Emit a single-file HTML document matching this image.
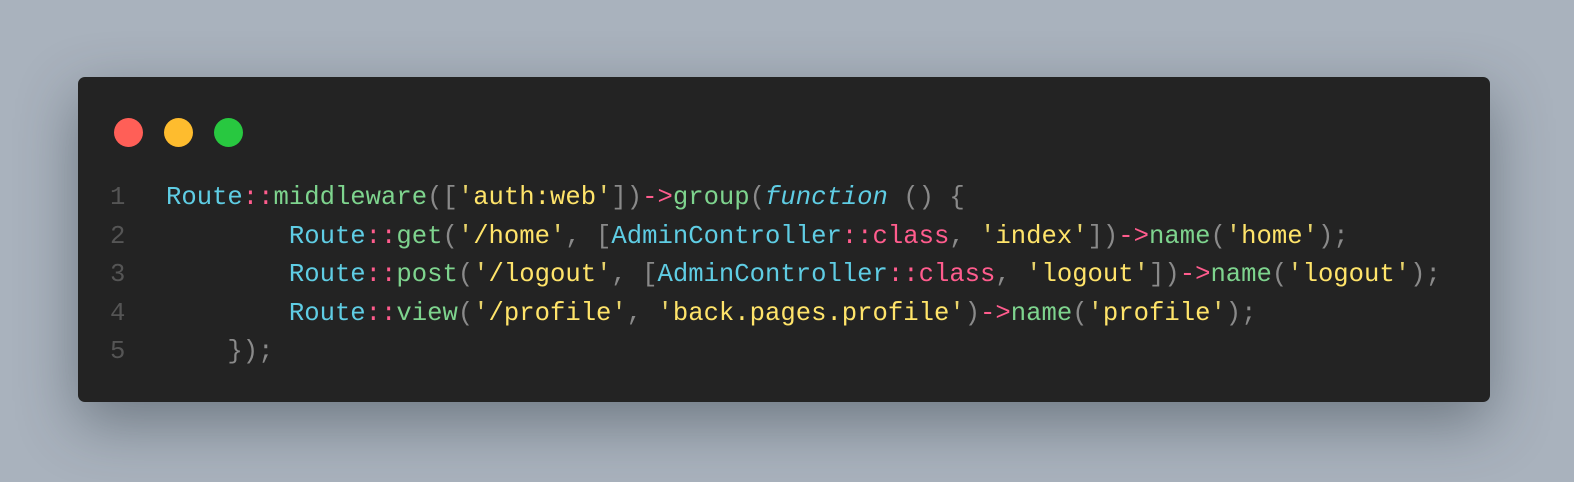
<!DOCTYPE html>
<html><head><style>
html,body{margin:0;padding:0;}
body{width:1574px;height:482px;background:#a9b2bd;position:relative;overflow:hidden;font-family:"Liberation Mono",monospace;}
.win{position:absolute;left:78px;top:77px;right:84px;height:325px;background:#232323;border-radius:7px;box-shadow:0 20px 60px rgba(40,50,60,0.45);}
.dot{position:absolute;top:118px;width:29px;height:29px;border-radius:50%;}
.code{position:absolute;left:0;top:179px;font-size:25.6px;line-height:38.5px;white-space:pre;color:#8a8a8a;}
.ln{position:absolute;left:110px;width:30px;color:#555;}
.l{position:absolute;left:166px;}
.c{color:#5fcde4}.g{color:#7ed48e}.y{color:#ffe46a}.q{color:#e8d36a}.p{color:#ff5c8d}.i{color:#5fcde4;font-style:italic}
</style></head><body>
<div class="win"></div>
<div class="dot" style="left:114px;background:#ff5f57"></div>
<div class="dot" style="left:164px;background:#febc2e"></div>
<div class="dot" style="left:214px;background:#28c840"></div>
<div class="code" style="width:1574px">
<div class="ln" style="top:0">1</div><div class="l" style="top:0"><span class="c">Route</span><span class="p">::</span><span class="g">middleware</span>([<span class="q">'</span><span class="y">auth:web</span><span class="q">'</span>])<span class="p">-&gt;</span><span class="g">group</span>(<span class="i">function</span> () {</div>
<div class="ln" style="top:38.5px">2</div><div class="l" style="top:38.5px">        <span class="c">Route</span><span class="p">::</span><span class="g">get</span>(<span class="q">'</span><span class="y">/home</span><span class="q">'</span>, [<span class="c">AdminController</span><span class="p">::class</span>, <span class="q">'</span><span class="y">index</span><span class="q">'</span>])<span class="p">-&gt;</span><span class="g">name</span>(<span class="q">'</span><span class="y">home</span><span class="q">'</span>);</div>
<div class="ln" style="top:77px">3</div><div class="l" style="top:77px">        <span class="c">Route</span><span class="p">::</span><span class="g">post</span>(<span class="q">'</span><span class="y">/logout</span><span class="q">'</span>, [<span class="c">AdminController</span><span class="p">::class</span>, <span class="q">'</span><span class="y">logout</span><span class="q">'</span>])<span class="p">-&gt;</span><span class="g">name</span>(<span class="q">'</span><span class="y">logout</span><span class="q">'</span>);</div>
<div class="ln" style="top:115.5px">4</div><div class="l" style="top:115.5px">        <span class="c">Route</span><span class="p">::</span><span class="g">view</span>(<span class="q">'</span><span class="y">/profile</span><span class="q">'</span>, <span class="q">'</span><span class="y">back.pages.profile</span><span class="q">'</span>)<span class="p">-&gt;</span><span class="g">name</span>(<span class="q">'</span><span class="y">profile</span><span class="q">'</span>);</div>
<div class="ln" style="top:154px">5</div><div class="l" style="top:154px">    });</div>
</div>
</body></html>
